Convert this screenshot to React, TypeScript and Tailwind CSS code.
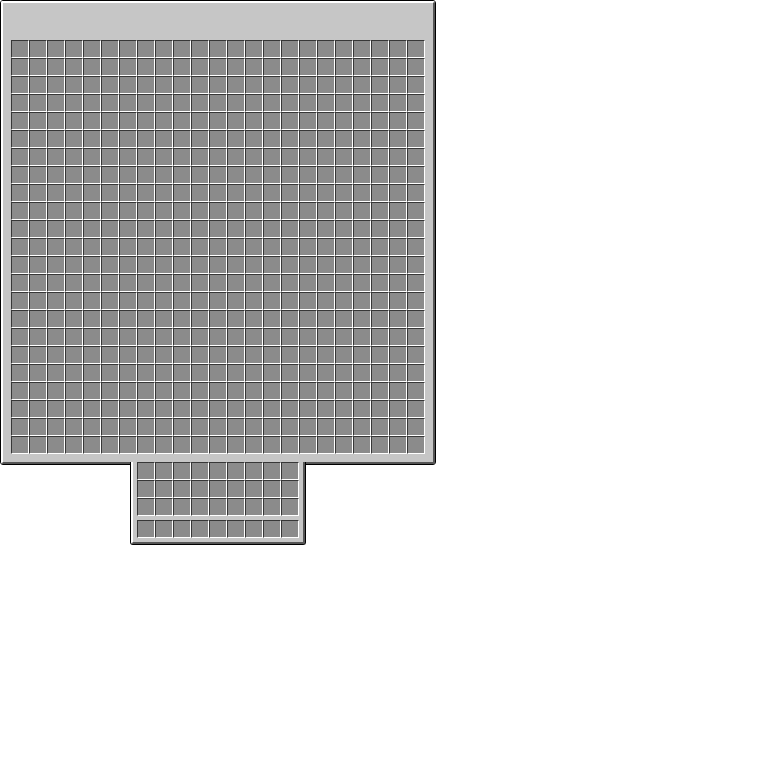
import React from "react";

const Slot: React.FC = () => (
  <div className="w-[18px] h-[18px] bg-[#8b8b8b] border-t border-l border-t-[#373737] border-l-[#373737] border-b border-r border-b-white border-r-white" />
);

const SlotGrid: React.FC<{ cols: number; rows: number }> = ({ cols, rows }) => (
  <div className="flex flex-col">
    {Array.from({ length: rows }).map((_, r) => (
      <div key={r} className="flex">
        {Array.from({ length: cols }).map((_, c) => (
          <Slot key={c} />
        ))}
      </div>
    ))}
  </div>
);

export default function App() {
  return (
    <div className="flex flex-col items-start">
      {/* chest panel */}
      <div className="w-[436px] h-[465px] border border-black rounded-[3px] bg-[#c6c6c6]">
        <div className="h-full border-t-2 border-l-2 border-t-white border-l-white border-b-2 border-r-2 border-b-[#555555] border-r-[#555555] rounded-[2px] pt-[37px] pl-[8px]">
          <SlotGrid cols={23} rows={23} />
        </div>
      </div>

      {/* player inventory */}
      <div className="relative z-10 ml-[130px] -mt-[3px] w-[176px] border-l border-r border-b border-black rounded-b-[3px] bg-[#c6c6c6]">
        <div className="border-l-2 border-l-white border-r-2 border-r-[#555555] border-b-2 border-b-[#555555] rounded-b-[2px] pl-[4px] pb-[4px]">
          <SlotGrid cols={9} rows={3} />
          <div className="mt-[4px]">
            <SlotGrid cols={9} rows={1} />
          </div>
        </div>
      </div>
    </div>
  );
}
